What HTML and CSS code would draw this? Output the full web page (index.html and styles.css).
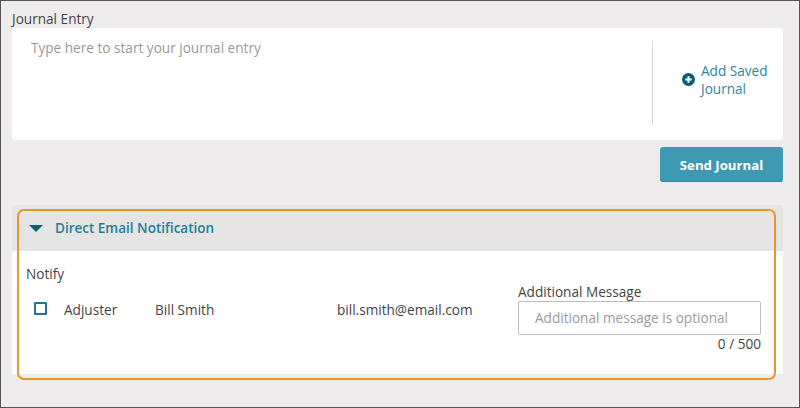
FILE: index.html
```html
<!DOCTYPE html>
<html>
<head>
<meta charset="utf-8">
<link rel="stylesheet" href="styles.css">
</head>
<body>
<div class="frame">
  <div class="label">Journal Entry</div>
  <div class="card">
    <div class="entry">Type here to start your journal entry</div>
    <div class="side">
      <a class="add-saved">
        <svg class="plus" width="13" height="13" viewBox="0 0 13 13"><circle cx="6.5" cy="6.5" r="6.5" fill="#0e5a72"/><path d="M6.5 3.3v6.4M3.3 6.5h6.4" stroke="#fff" stroke-width="2"/></svg>
        <span>Add Saved<br>Journal</span>
      </a>
    </div>
  </div>
  <div class="actions">
    <button class="send">Send Journal</button>
  </div>
  <div class="section">
    <div class="section-head">
      <svg class="caret" width="14" height="7" viewBox="0 0 14 7"><path d="M0 0h14L7 7z" fill="#0e5f78"/></svg>
      <span class="title">Direct Email Notification</span>
    </div>
    <div class="section-body">
      <div class="notify">Notify</div>
      <div class="row">
        <span class="check"></span>
        <span class="cell role">Adjuster</span>
        <span class="cell name">Bill Smith</span>
        <span class="cell email">bill.smith@email.com</span>
        <div class="msg">
          <div class="msg-label">Additional Message</div>
          <div class="msg-input">Additional message is optional</div>
          <div class="counter">0 / 500</div>
        </div>
      </div>
    </div>
    <div class="focus-ring"></div>
  </div>
</div>
</body>
</html>
```
FILE: styles.css
```css
* { box-sizing: border-box; }
body {
  margin: 0;
  font-family: "Open Sans", "Noto Sans", sans-serif;
  color: #444;
}
.frame {
  width: 800px;
  height: 408px;
  border: 1px solid #555;
  background: #eeecec;
  padding: 0 16px 0 11px;
  overflow: hidden;
}
.label {
  font-size: 13.6px;
  line-height: 18px;
  padding-top: 9px;
  color: #444;
}
.card {
  height: 112px;
  background: #fff;
  border-radius: 4px;
  display: flex;
}
.entry {
  flex: 1;
  padding: 11px 19px;
  font-size: 13.6px;
  line-height: 18px;
  color: #9a9a9a;
}
.side {
  width: 131px;
  margin: 13px 0 15px;
  border-left: 1px solid #d4d4d4;
  display: flex;
  align-items: center;
  padding: 0 0 6px 29px;
}
.add-saved {
  display: flex;
  align-items: center;
  gap: 6px;
  color: #2c86a1;
  font-size: 13.6px;
  line-height: 18px;
}
.plus { flex: none; margin-top: -1px; }
.actions {
  display: flex;
  justify-content: flex-end;
  padding-top: 7px;
}
.send {
  width: 123px;
  height: 35px;
  border: none;
  border-radius: 3px;
  background: #3e9ab2;
  box-shadow: inset 0 -1px 0 rgba(0,0,0,0.12);
  color: #fff;
  font-family: inherit;
  font-weight: 700;
  font-size: 13.2px;
  padding: 0;
}
.section {
  position: relative;
  margin-top: 23px;
  background: #fff;
}
.section-head {
  height: 46px;
  background: #e6e4e5;
  display: flex;
  align-items: center;
  padding-left: 17px;
  gap: 12px;
}
.caret { margin-top: 1px; }
.title {
  color: #1d7f99;
  font-weight: 600;
  font-size: 13.5px;
}
.section-body {
  height: 123px;
  padding: 13px 0 0 14px;
}
.notify {
  font-size: 13.6px;
  line-height: 20px;
}
.row {
  display: flex;
  align-items: flex-start;
  padding-left: 8px;
  margin-top: -1px;
  font-size: 13.6px;
}
.check {
  width: 13px;
  height: 13px;
  border: 2px solid #1f7592;
  border-radius: 1px;
  margin-top: 19px;
  margin-right: 17px;
  flex: none;
}
.cell {
  line-height: 20px;
  margin-top: 17px;
}
.role { width: 91px; }
.name { width: 182px; }
.email { width: 181px; }
.msg { width: 243px; }
.msg-label { line-height: 18px; }
.msg-input {
  height: 34px;
  border: 1px solid #bdbdbd;
  border-radius: 2px;
  padding: 0 16px;
  line-height: 32px;
  color: #9a9a9a;
}
.counter {
  text-align: right;
  line-height: 18px;
}
.focus-ring {
  position: absolute;
  left: 5px;
  top: 4px;
  right: 7px;
  bottom: -6px;
  border: 2px solid #e8962c;
  border-radius: 7px;
  pointer-events: none;
}
```
